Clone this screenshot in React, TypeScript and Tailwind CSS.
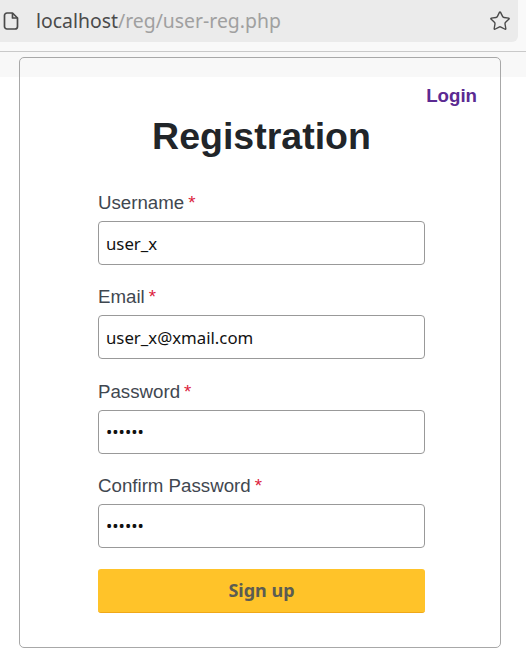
import { Star } from "lucide-react";

const fields = [
  { label: "Username", value: "user_x", type: "text" },
  { label: "Email", value: "user_x@xmail.com", type: "text" },
  { label: "Password", value: "secret", type: "password" },
  { label: "Confirm Password", value: "secret", type: "password" },
];

export default function App() {
  return (
    <div className="h-[649px] w-[526px] overflow-hidden bg-white font-['Liberation_Sans',sans-serif]">
      <div className="h-[52px] border-b border-[#c9c9c9] bg-[#f9f9f9] pr-2">
        <div className="flex h-[42px] items-center rounded-br-md bg-[#ebebeb] pl-[3px] pr-[7px]">
          <svg width="16" height="18" viewBox="0 0 16 18" fill="none" stroke="#4a4a4a" strokeWidth="1.7" strokeLinejoin="round">
            <path d="M1.5 3.5a2.5 2.5 0 0 1 2.5-2.5h5.5l5 5v8.5a2.5 2.5 0 0 1-2.5 2.5H4a2.5 2.5 0 0 1-2.5-2.5z" />
            <path d="M9.5 1v5h5" />
          </svg>
          <div className="ml-[17px] font-['Noto_Sans',sans-serif] text-[19.4px] text-[#a0a0a0]">
            <span className="text-[#4b4b4b]">localhost</span>/reg/user-reg.php
          </div>
          <Star className="ml-auto text-[#4a4a4a]" size={22} strokeWidth={1.5} />
        </div>
      </div>
      <div className="h-[25px] bg-[#f8f8f8]" />
      <div className="relative mx-[19px] -mt-[20px] h-[591px] w-[482px] rounded-[5px] border border-[#a8a8a8] pl-[78px] pr-[75px]">
        <div className="mt-[26px] -mr-[52px] text-right text-[18.7px] leading-[24px] font-bold text-[#5b2a92]">Login</div>
        <h1 className="mt-[6px] text-center text-[37.5px] leading-[44px] font-bold text-[#212529]">Registration</h1>
        <form className="mt-[33px] flex flex-col gap-[20.3px]">
          {fields.map((f) => (
            <div key={f.label}>
              <label className="block text-[18.7px] leading-[24px] text-[#3f4750]">
                {f.label}
                <span className="ml-[4px] text-[#dc1c3c]">*</span>
              </label>
              <input
                readOnly
                type={f.type}
                value={f.value}
                className="mt-[6px] block h-[44px] w-full rounded-[4px] border border-[#999999] bg-white px-[7px] font-['Noto_Sans',sans-serif] text-[16.8px] text-[#111]"
              />
            </div>
          ))}
        </form>
        <button className="mt-[21px] h-[44px] w-full rounded-[3px] border-b border-[#f0a818] bg-[#ffc329] font-['Noto_Sans',sans-serif] text-[18px] font-bold text-[#5c5c52]">
          Sign up
        </button>
      </div>
    </div>
  );
}
